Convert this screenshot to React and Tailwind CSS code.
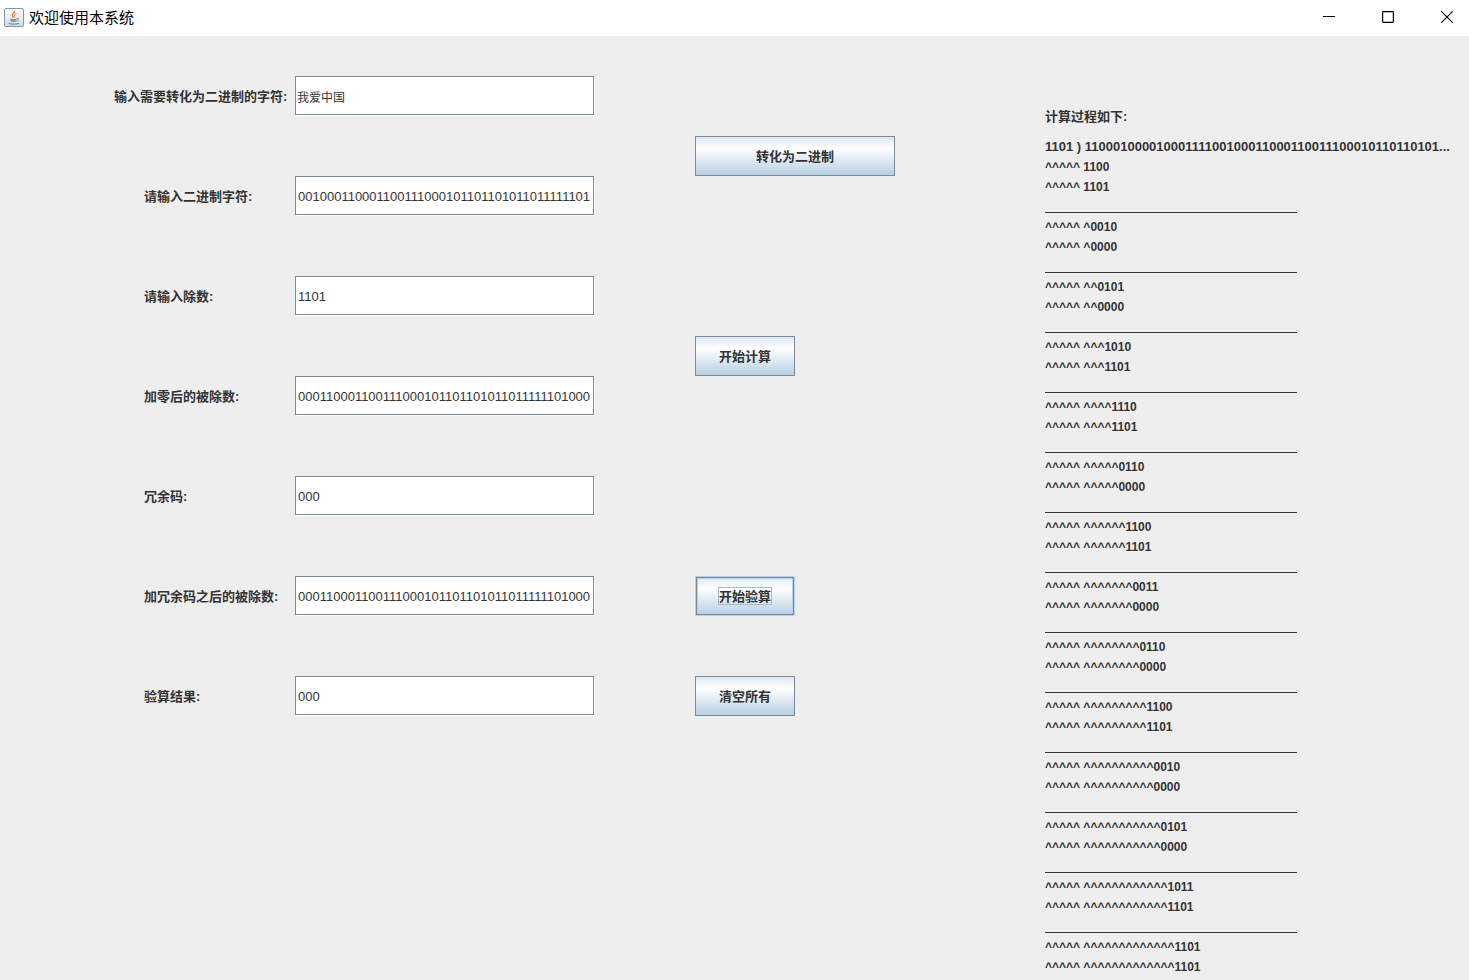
import React, { useState } from "react";

const initialFields = [
  { id: "text", label: "输入需要转化为二进制的字符:", value: "我爱中国", wide: true },
  { id: "binary", label: "请输入二进制字符:", value: "001000110001100111000101101101011011111101" },
  { id: "divisor", label: "请输入除数:", value: "1101" },
  { id: "padded", label: "加零后的被除数:", value: "000110001100111000101101101011011111101000" },
  { id: "crc", label: "冗余码:", value: "000" },
  { id: "encoded", label: "加冗余码之后的被除数:", value: "000110001100111000101101101011011111101000" },
  { id: "check", label: "验算结果:", value: "000" },
];

const steps = [
  ["1100", "1101"],
  ["0010", "0000"],
  ["0101", "0000"],
  ["1010", "1101"],
  ["1110", "1101"],
  ["0110", "0000"],
  ["1100", "1101"],
  ["0011", "0000"],
  ["0110", "0000"],
  ["1100", "1101"],
  ["0010", "0000"],
  ["0101", "0000"],
  ["1011", "1101"],
  ["1101", "1101"],
];

function JavaIcon() {
  return (
    <svg width="20" height="20" viewBox="0 0 20 20" fill="none" aria-hidden="true">
      <defs>
        <linearGradient id="tile" x1="0" y1="0" x2="0" y2="1">
          <stop offset="0" stopColor="#ffffff" />
          <stop offset="1" stopColor="#cfd9e2" />
        </linearGradient>
      </defs>
      <rect x="0.5" y="0.5" width="19" height="18" rx="1.5" fill="url(#tile)" stroke="#7f98ad" />
      <path d="M10.5 3c1 2-3.5 3-2 5.2.4.7 1 1 1.2 1.6" stroke="#e8803a" strokeWidth="1.5" />
      <path d="M12.5 5.5c-2 1-2.6 2-1.6 3.6" stroke="#e8a06a" strokeWidth="1.2" />
      <path d="M6 10.5c2 .7 5 .7 7 0l-.8 3c-1.4.6-4 .6-5.4 0z" fill="#6f97b5" />
      <path d="M13 10.6c2.5-.6 2.3 1.9-.2 2.4" stroke="#6f97b5" />
      <path d="M4.5 15.2c2.5 1.3 8 1.3 10.5 0" stroke="#6f97b5" strokeWidth="1.3" />
    </svg>
  );
}

function TitleBar() {
  return (
    <header className="flex h-9 items-center justify-between bg-white">
      <div className="flex items-center gap-[5px] pl-1">
        <JavaIcon />
        <h1 className="text-[15px] text-black">欢迎使用本系统</h1>
      </div>
      <div className="flex gap-[15px] pb-0.5">
        <button type="button" aria-label="最小化" className="flex h-8 w-11 items-center justify-center">
          <svg width="12" height="12" viewBox="0 0 12 12" stroke="#000" fill="none">
            <path d="M0 5.5h12" />
          </svg>
        </button>
        <button type="button" aria-label="最大化" className="flex h-8 w-11 items-center justify-center">
          <svg width="12" height="12" viewBox="0 0 12 12" stroke="#000" fill="none">
            <rect x="0.6" y="0.6" width="10.8" height="10.8" rx="0.8" strokeWidth="1.2" />
          </svg>
        </button>
        <button type="button" aria-label="关闭" className="flex h-8 w-11 items-center justify-center">
          <svg width="12" height="12" viewBox="0 0 12 12" stroke="#000" fill="none">
            <path d="M0.3 0.3l11.4 11.4M11.7 0.3L0.3 11.7" strokeWidth="1.1" />
          </svg>
        </button>
      </div>
    </header>
  );
}

function Field({ id, label, value, wide, onChange }) {
  return (
    <div className="flex h-10 items-center">
      <label
        htmlFor={id}
        className={
          (wide ? "w-[181px] " : "ml-[30px] w-[151px] ") +
          "shrink-0 pt-0.5 text-[13px] font-bold whitespace-nowrap"
        }>
        {label}
      </label>
      <input
        id={id}
        type="text"
        value={value}
        onChange={(e) => onChange(id, e.target.value)}
        className={
          (wide ? "px-px text-xs " : "px-0.5 text-[13px] ") +
          "mr-px mb-px h-[39px] w-[299px] border border-[#7a8a99] bg-white pt-0.5 shadow-[1px_1px_0_#ffffff] outline-none"
        }
      />
    </div>
  );
}

function MetalButton({ children, wide, focused }) {
  return (
    <button
      type="button"
      className={
        (wide ? "w-[200px] " : "w-[100px] ") +
        (focused
          ? "border-[#b8cfe5] shadow-[inset_0_0_0_1px_#7a8a99,inset_0_0_0_2px_#b8cfe5] "
          : "border-[#7a8a99] pt-0.5 ") +
        "flex h-10 items-center justify-center border bg-linear-to-b from-[#dde8f3] via-white via-30% to-[#b8cfe5] text-[13px] font-bold"
      }>
      {focused ? <span className="border border-[#a3b8cc] pt-px leading-[15px]">{children}</span> : children}
    </button>
  );
}

function App() {
  const [fields, setFields] = useState(initialFields);

  const updateField = (id, value) => {
    setFields(fields.map((field) => (field.id === id ? { ...field, value } : field)));
  };

  return (
    <div className="flex min-h-screen flex-col bg-[#eeeeee] font-['Liberation_Sans','Noto_Sans_CJK_SC',sans-serif] text-[#333333]">
      <TitleBar />
      <main className="flex grow items-start pt-10">
        <form className="flex gap-[100px] pl-[114px]">
          <div className="flex flex-col gap-[60px]">
            {fields.map((field) => (
              <Field key={field.id} {...field} onChange={updateField} />
            ))}
          </div>
          <div className="flex w-[200px] flex-col pt-[60px]">
            <MetalButton wide>转化为二进制</MetalButton>
            <div className="mt-40">
              <MetalButton>开始计算</MetalButton>
            </div>
            <div className="mt-[200px] flex flex-col gap-[60px]">
              <MetalButton focused>开始验算</MetalButton>
              <MetalButton>清空所有</MetalButton>
            </div>
          </div>
        </form>
        {/* Long division, one block for each quotient digit */}
        <section className="ml-[150px] min-w-0 flex-1 pt-[31px] text-xs leading-5 font-bold whitespace-nowrap">
          <h2 className="mb-2.5 text-[13px] leading-5">计算过程如下:</h2>
          <p className="text-[13px] leading-5">1101 ) 11000100001000111100100011000110011100010110110101...</p>
          {steps.map(([dividend, divisor], i) => (
            <div key={i}>
              {i > 0 && <hr className="mt-[15px] mb-1 w-[252px] border-[#333333]" />}
              <p>{"^^^^^ " + "^".repeat(i) + dividend}</p>
              <p>{"^^^^^ " + "^".repeat(i) + divisor}</p>
            </div>
          ))}
        </section>
      </main>
    </div>
  );
}

export default App;
